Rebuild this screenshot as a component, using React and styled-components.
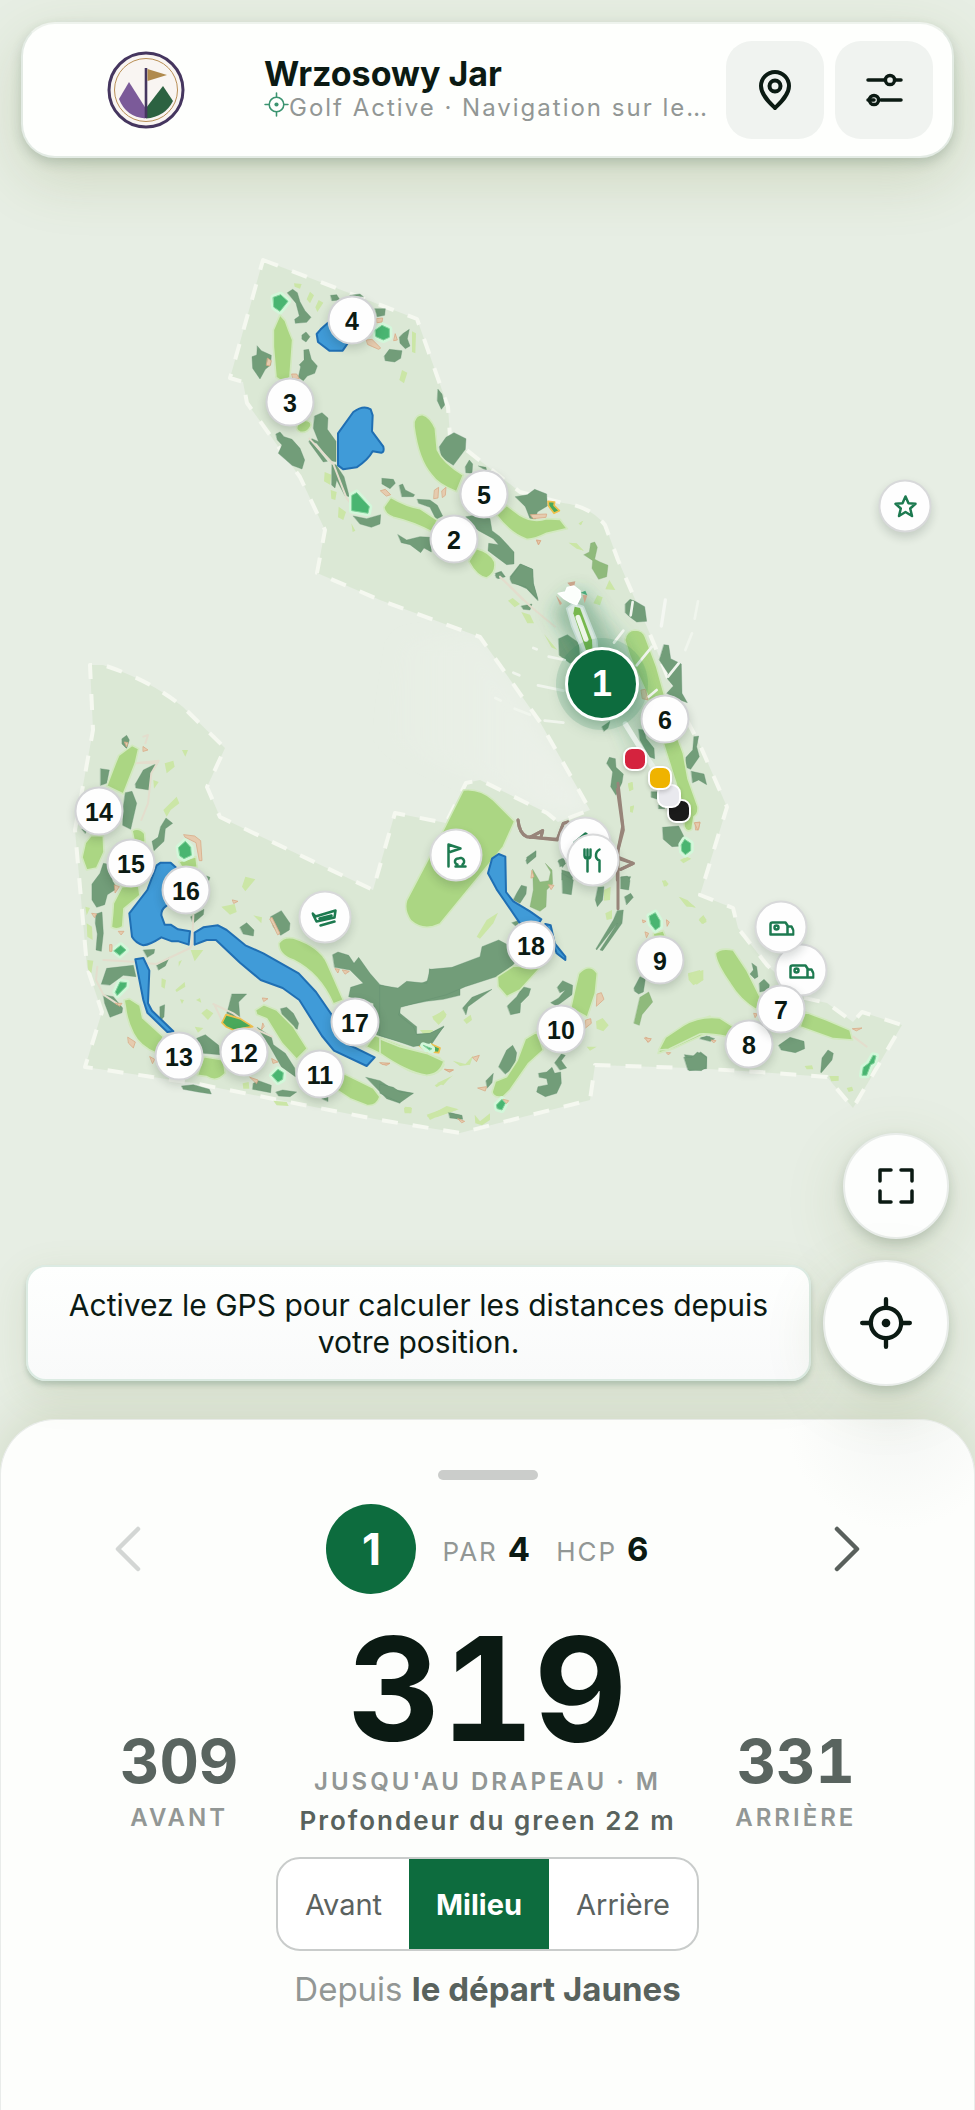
import React, { useState } from "react";
import styled, { createGlobalStyle, css } from "styled-components";

const GlobalStyle = createGlobalStyle`
  *, *::before, *::after { box-sizing: border-box; }
  html, body { margin: 0; padding: 0; }
  body { background: #e7eee4; }
  button { font: inherit; color: inherit; border: 0; padding: 0; margin: 0; background: none; cursor: pointer; }
  h1, p { margin: 0; }
`;

const INK = "#0b1a13";
const GREEN = "#0d6c3e";

const Page = styled.div`
  display: flex;
  flex-direction: column;
  min-height: 100vh;
  overflow-x: hidden;
  font-family: Inter, "Liberation Sans", sans-serif;
  color: ${INK};
  background: #e7eee4;
`;

/* ---------- header ---------- */

const Header = styled.header`
  position: relative;
  z-index: 2;
  display: flex;
  align-items: center;
  gap: 14px;
  margin: 22px 21px 0;
  padding: 17px 19px;
  border: 2px solid #e3ebe4;
  border-top-color: #eef3ed;
  border-radius: 34px;
  background: #fefffd;
  box-shadow: 0 5px 12px rgba(40, 75, 60, 0.2), 0 20px 60px rgba(110, 125, 50, 0.2);
`;

const LogoSlot = styled.div`
  display: flex;
  justify-content: center;
  flex: 0 0 208px;
`;

const Titles = styled.div`
  flex: 1 1 0;
  min-width: 0;
  display: flex;
  flex-direction: column;
`;

const Title = styled.h1`
  font-size: 34px;
  line-height: 36px;
  font-weight: 700;
`;

const Subtitle = styled.div`
  display: flex;
  align-items: center;
  color: #929795;
  font-size: 24px;
  line-height: 30px;
  letter-spacing: 2px;
  white-space: nowrap;

  svg { flex: none; margin-bottom: 8px; }
  span { overflow: hidden; text-overflow: ellipsis; }
`;

const Actions = styled.div`
  display: flex;
  gap: 11px;
`;

const ActionButton = styled.button`
  display: grid;
  place-items: center;
  width: 98px;
  height: 98px;
  border-radius: 26px;
  background: #f0f3f0;
`;

/* ---------- map ---------- */

const MapCanvas = styled.main`
  position: relative;
  font-family: "Liberation Sans", sans-serif;

  > svg { display: block; width: 100%; height: auto; overflow: visible; }
`;

const Marker = styled.button`
  position: absolute;
  display: grid;
  place-items: center;
  transform: translate(-50%, -50%);
  border-radius: 50%;
  background: #fefefe;
`;

const HolePin = styled(Marker)`
  width: 49px;
  height: 49px;
  border: 2px solid #d2d3d5;
  font-size: 25px;
  line-height: 28px;
  font-weight: 700;
  box-shadow: 0 4px 10px rgba(20, 40, 30, 0.18);

  ${(p) =>
    p.$active &&
    css`
      width: 74px;
      height: 74px;
      border: 3px solid #fff;
      background: ${GREEN};
      color: #fff;
      font-size: 36px;
      box-shadow: 0 0 0 9px rgba(40, 130, 90, 0.16), 0 4px 16px rgba(20, 80, 50, 0.35);
    `}
`;

const PoiPin = styled(Marker)`
  width: 53px;
  height: 53px;
  border: 2px solid #d8d9da;
  box-shadow: 0 5px 10px rgba(20, 40, 30, 0.16);
`;

const TeePin = styled(Marker)`
  width: 24px;
  height: 24px;
  border: 2px solid #fff;
  border-radius: 9px;
  background: ${(p) => p.$color};
  box-shadow: 0 2px 4px rgba(0, 0, 0, 0.18);
`;

const Controls = styled.section`
  position: relative;
  z-index: 1;
  display: flex;
  flex-direction: column;
  gap: 21px;
  padding: 0 26px 33px;
`;

const ControlRow = styled.div`
  display: flex;
  align-items: center;
  justify-content: flex-end;
  gap: 12px;
`;

const RoundButton = styled.button`
  flex: none;
  display: grid;
  place-items: center;
  width: ${(p) => p.$size}px;
  height: ${(p) => p.$size}px;
  border: 2px solid #e9edea;
  border-radius: 50%;
  background: #fdfefd;
  box-shadow: 0 5px 12px rgba(30, 60, 45, 0.18), 0 16px 60px rgba(110, 125, 60, 0.18);
`;

const Hint = styled.p`
  flex: 1;
  padding: 20px 30px 18px;
  border: 2px solid #dcebe3;
  border-radius: 20px;
  background: linear-gradient(#fefffe, #f9fafa);
  box-shadow: 0 4px 5px rgba(60, 100, 85, 0.24), 0 12px 40px rgba(110, 125, 60, 0.14);
  text-align: center;
  font-size: 30px;
  line-height: 37px;
`;

/* ---------- bottom sheet ---------- */

const Sheet = styled.section`
  position: relative;
  flex: 1;
  display: flex;
  flex-direction: column;
  align-items: center;
  padding: 50px 24px 90px;
  border: 1px solid #e9ecea;
  border-bottom: 0;
  border-radius: 56px 56px 0 0;
  background: radial-gradient(circle at 92% 0, #f4f6f4, #fdfefc 110px);
  box-shadow: 0 -8px 50px rgba(110, 125, 60, 0.18);
`;

const Handle = styled.div`
  width: 100px;
  height: 10px;
  border-radius: 5px;
  background: #cbcdcb;
`;

const HoleNav = styled.div`
  align-self: stretch;
  display: flex;
  align-items: center;
  justify-content: space-between;
  margin-top: 24px;
  padding: 0 79px;
`;

const StepButton = styled.button`
  display: grid;
  place-items: center;
  width: 48px;
  height: 64px;
  color: #59605c;
  &:disabled { color: #d3d6d4; cursor: default; }
`;

const HoleInfo = styled.div`
  display: flex;
  align-items: center;
  gap: 26px;
`;

const HoleBadge = styled.span`
  display: grid;
  place-items: center;
  width: 90px;
  height: 90px;
  border-radius: 50%;
  background: ${GREEN};
  color: #fff;
  font-size: 44px;
  font-weight: 700;
`;

const Fact = styled.span`
  display: flex;
  align-items: baseline;
  gap: 10px;
  color: #929795;
  font-size: 26px;
  letter-spacing: 2px;

  b { color: ${INK}; font-size: 33px; font-weight: 700; letter-spacing: 0; }
`;

const Distances = styled.div`
  align-self: stretch;
  display: grid;
  grid-template-columns: repeat(3, minmax(0, 1fr));
  align-items: end;
  margin-top: 23px;
`;

const Distance = styled.div`
  display: flex;
  flex-direction: column;
  align-items: center;
  white-space: nowrap;
`;

const Meters = styled.strong`
  font-weight: 700;
  font-size: ${(p) => (p.$main ? 144 : 61)}px;
  line-height: ${(p) => (p.$main ? 144 : 72)}px;
  color: ${(p) => (p.$main ? INK : "#59645f")};
  font-variant-numeric: tabular-nums;
`;

const Caption = styled.span`
  color: #929795;
  font-size: 24px;
  line-height: 42px;
  font-weight: 600;
  letter-spacing: 3px;
`;

const Depth = styled.span`
  color: #58625d;
  font-size: 26px;
  line-height: 36px;
  font-weight: 600;
  letter-spacing: 2px;
`;

const Segments = styled.div`
  display: flex;
  margin-top: 18px;
  height: 94px;
  border: 2px solid #c9cccb;
  border-radius: 24px;
  overflow: hidden;
  background: #fff;
`;

const Segment = styled.button`
  padding: 0 27px;
  font-size: 29px;
  color: #5b625f;

  ${(p) =>
    p.$active &&
    css`
      background: ${GREEN};
      color: #fff;
      font-weight: 700;
    `}
`;

const Origin = styled.p`
  margin-top: 16px;
  font-size: 33px;
  line-height: 44px;
  color: #929795;

  b { color: #58625d; font-weight: 700; }
`;

/* ---------- drawings ---------- */

const Logo = () => (
  <svg width="78" height="78" viewBox="0 0 78 78" aria-hidden="true">
    <circle cx="39" cy="39" r="37" fill="#f9f5f2" stroke="#45365f" strokeWidth="3" />
    <circle cx="39" cy="39" r="31.5" fill="none" stroke="#b98f55" strokeWidth="1" />
    <path d="M22 31 38.500 57V67.500Q19 66 12 48Z" fill="#7b5a99" />
    <path d="M56 35 39 57V67.500Q58 66 66 50Z" fill="#2c6241" />
    <path d="M39 17V67" stroke="#45365f" strokeWidth="2.600" />
    <path d="M40.500 18 60 24 40.500 30Z" fill="#b08a4d" />
  </svg>
);

const Target = ({ size, stroke, color }) => (
  <svg width={size} height={size} viewBox="0 0 24 24" fill="none" stroke={color} strokeWidth={stroke} strokeLinecap="round" aria-hidden="true">
    <circle cx="12" cy="12" r="7" />
    <circle cx="12" cy="12" r="2" fill={color} stroke="none" />
    <path d="M12 1V5M12 19V23M1 12H5M19 12H23" />
  </svg>
);

const PlaceIcon = () => (
  <svg width="34" height="42" viewBox="0 0 34 42" fill="none" stroke={INK} strokeWidth="4" strokeLinejoin="round" aria-hidden="true">
    <path d="M17 39C12 34 3 26 3 17a14 14 0 0 1 28 0c0 9-9 17-14 22Z" />
    <circle cx="17" cy="17" r="5.500" />
  </svg>
);

const SlidersIcon = () => (
  <svg width="38" height="36" viewBox="0 0 38 36" fill="none" stroke={INK} strokeWidth="3.500" strokeLinecap="round" aria-hidden="true">
    <path d="M3 8H20M30 8H36M3 28H9M16 28H36" />
    <circle cx="25" cy="8" r="4.600" />
    <circle cx="9" cy="28" r="4.600" />
  </svg>
);

const ExpandIcon = () => (
  <svg width="36" height="36" viewBox="0 0 36 36" fill="none" stroke={INK} strokeWidth="3.500" strokeLinecap="round" strokeLinejoin="round" aria-hidden="true">
    <path d="M2 13V2H13M23 2H34V13M34 23V34H23M13 34H2V23" />
  </svg>
);

const Chevron = ({ left }) => (
  <svg width="28" height="46" viewBox="0 0 28 46" fill="none" stroke="currentColor" strokeWidth="4.500" strokeLinecap="round" strokeLinejoin="round" aria-hidden="true">
    <path d={left ? "M24 3 4 23 24 43" : "M4 3 24 23 4 43"} />
  </svg>
);

const poiIcons = {
  star: <path d="M13 3 16 9.800 23 10.300 17.700 15 19.500 22.500 13 18.500 6.500 22.500 8.300 15 3 10.300 10 9.800Z" />,
  range: <path d="M5 24V2L17 6 5 10M12 24H22M14 22a3 3 0 0 1 1-6 3 3 0 0 1 4 6" />,
  food: <path d="M4 2V8Q4 11 7 11Q10 11 10 8V2M7 2V24M19 2Q15 4 15.500 9Q16 12 19 13V24" />,
  house: <path d="M2 12 13 3 24 12M5 12V23H21V12" />,
  trolley: <path d="M1 9 4 12 24 6 23 13 5 17ZM8 14 20 11M9 21 23 17" />,
  camper: (
    <>
      <path d="M2 20V10Q2 8 4 8H17L19 11V20ZM19 12H23L25 16V20H19" />
      <circle cx="8" cy="13" r="2" />
    </>
  ),
};

const PoiIcon = ({ name }) => (
  <svg width="26" height="26" viewBox="0 0 26 26" fill="none" stroke="#1d7a50" strokeWidth="2.500" strokeLinecap="round" strokeLinejoin="round" aria-hidden="true">
    {poiIcons[name]}
  </svg>
);

const BOUNDARY =
  "M263 260 417 319 448 407 450 437 520 492 563 503Q590 506 605 525L618 560 647 627 680 707 700 745 727 807 700 895 733 908 738 928 767 965 800 997 827 1003 853 1022 862 1012 902 1025 853 1108 827 1077 760 1072 690 1068 595 1065 590 1100 460 1133 380 1120 193 1083 85 1067 102 1012 87 967 75 830 93 730 90 665 103 665Q150 680 183 707L225 748 207 787 220 817 373 890 395 813 446 823 466 783 480 780 547 813 558 822 590 810 540 722 480 637 380 600 317 573 325 530 300 477 247 403 243 382 230 378Z";

const SHEETS = [
  {
    origin: "200 240",
    trees:
      "M262 158 278 148 292 158 300 185 315 212 333 232 320 247 286 250 284 238 298 228 288 190ZM172 318 184 332 214 346 212 375 196 388 180 417 158 385 156 350 170 345ZM312 330 326 328 334 358 352 378 344 400 322 408 310 422 295 412 302 380 298 374 312 360ZM306 285 318 276 330 290 318 306 306 298ZM392 166 410 164 420 180 396 182ZM450 166 480 162 490 170ZM525 206 556 206 554 226 532 230ZM610 280 628 268 622 296 630 318 616 326 600 310 598 292ZM553 348 568 328 606 332 602 355 584 366 556 362ZM714 448 726 462 734 495 724 508 712 482ZM344 528 366 518 384 534 382 568 408 604 408 665 392 662 350 610 326 604 336 596 356 605 340 565ZM228 582 240 576 252 590 276 598 300 625 314 660 306 687 276 676 235 640 246 615 232 600ZM332 602 382 664 370 666 328 608ZM396 674 408 674 432 710 448 770 434 766 410 720 405 744 395 735ZM546 715 580 718 586 730 570 746 546 732ZM598 736 608 732 616 750 644 764 640 770 606 770ZM652 778 690 780 712 796 728 828 708 838 690 802 656 790ZM460 828 500 836 542 824 540 852 514 862 480 852ZM594 884 620 900 660 890 692 892 694 936 672 924 662 938 630 914 604 908ZM718 620 738 592 762 578 798 596 796 628 760 676 724 652ZM796 680 808 660 818 672 816 700 798 698ZM836 678 858 682 860 692ZM798 830 830 825 870 836 876 872 900 890 942 936 942 972 920 974 864 932 866 910 896 914 880 896 836 872 810 850ZM946 770 982 764 1004 748 1040 762 1042 798 1012 816 1006 838 990 836 976 800ZM886 1000 904 994 916 1010 894 1016ZM930 1010 960 972 998 988 1000 1030 1014 1082 980 1046 936 1026Z",
    olive: "M1152 944 1168 936 1172 910 1184 906 1192 922 1184 958 1200 966 1224 976 1220 1010 1196 1018 1176 985 1178 962Z",
    fairway:
      "M240 224 256 242 266 270 278 300 270 412 Q248 430 228 412L220 320 220 270ZM300 540 Q340 540 332 560 320 582 300 576 285 570 292 556ZM642 545 Q650 522 668 524 690 530 706 565L712 630Q730 670 790 705L770 755Q715 735 695 705 655 660 642 560ZM552 800 572 772Q620 800 660 806L712 840 696 876Q640 846 580 832 550 820 552 800ZM806 964 830 926Q870 936 884 965 890 1000 860 1014 830 1010 806 964ZM890 826 920 796 960 826Q1000 850 1040 836L1080 838 1102 866 1040 880Q1000 900 980 898 930 880 890 826Z",
    rough:
      "M282 130 305 132 300 146 284 140ZM330 155 342 166 330 190 320 178ZM356 180 370 188 352 216 346 202ZM636 274 648 280 646 340 636 336ZM606 390 622 398 612 430 598 420ZM374 696 394 704 390 734 372 724ZM392 750 410 756 406 780 394 776ZM416 800 438 816 430 840 414 832ZM454 850 466 872 458 876ZM1136 850 1150 842 1142 856ZM1108 908 1130 910 1150 932 1120 918Z",
    green: "M220 172 242 164 264 184 240 214 222 202ZM526 270 546 256 568 266 568 292 550 300 528 290ZM456 766 470 758 508 800 504 820 456 812Z",
    sand: "M500 300 516 298 542 324 536 328 504 314ZM586 282 592 300 582 302ZM276 402 290 402 298 416 280 418ZM542 752 556 748 572 764 560 768ZM704 750 716 742 714 774 702 776ZM726 752 738 742 736 766 728 772ZM992 824 1040 822 1038 832 1000 836ZM203 355 214 362 210 378 200 376ZM530 236 548 234 546 246 532 248ZM1010 900 1022 902 1016 914Z",
    amber: "M1044 784 1064 786 1062 796 1078 812 1062 820 1046 798Z",
    water: "M362 268 384 248 450 300 428 332 388 332 354 306 350 282ZM414 580 460 516Q490 494 512 508L518 526 516 574 550 620Q554 636 544 638L518 634Q504 660 470 682L430 688 414 676Z",
    paths: "M328 596 400 672 440 775 460 800M900 1010 970 1080",
    roads: "",
  },
  {
    origin: "480 480",
    trees:
      "M46 285 60 276 74 290 50 294ZM124 378 156 372 150 390 130 388ZM90 296 122 252 158 268 160 310 174 358 138 320 96 310ZM436 372 450 358 466 364 494 380 500 424 470 426 446 408 436 398ZM236 476 262 464 296 488 300 540 270 550 238 526ZM552 494 566 496 572 536 604 552 606 640 622 668 600 660 560 640 580 618 562 596 564 580 538 540ZM642 770 656 768 650 800 658 830 632 868 614 860 618 832 638 810ZM634 874 672 882 680 914 656 900 638 908ZM476 748 492 750 498 775 522 805 524 836 508 830 480 780ZM380 850 388 832 406 836 408 862 430 882 426 908 408 946 392 920 398 876ZM548 1042 596 1038 612 1070 606 1098 576 1100 550 1078ZM366 740 390 724 384 744 372 754ZM514 935 532 935 532 958 514 952ZM536 975 556 975 554 986 536 986ZM140 1132 168 1112 166 1128 142 1150ZM234 1144 246 1136 256 1150 248 1162ZM246 1170 280 1180 276 1200 246 1200ZM424 1190 452 1190 448 1200 426 1200Z",
    fairway:
      "M434 480 Q440 450 466 450 490 452 496 470L530 560 580 740 610 820 624 896 654 980Q656 1004 642 1010L636 1048Q620 1060 612 1040L610 980 550 790 500 640 450 530Z",
    rough:
      "M376 328 388 300 406 330ZM84 362 98 354 120 372 104 382ZM124 396 150 404 162 430 142 430ZM340 370 352 346 368 352 360 376ZM266 188 290 192 312 212 290 206ZM296 132 308 122 304 134ZM444 912 458 906 460 928 448 934ZM450 980 462 976 458 998 450 996ZM600 1140 620 1130 634 1136 610 1150ZM192 462 232 510 214 502Z",
    green: "M604 1094 614 1078 632 1090 632 1112 616 1124 606 1114Z",
    sand: "M646 1028 660 1026 656 1048 648 1050ZM484 630 496 628 504 660 488 656ZM172 182 182 182 176 192Z",
    amber: "",
    water: "",
    paths: "M60 290 150 378 225 440",
    roads: "M412 928 428 1040 412 1120 412 1200M114 1020Q118 1060 140 1070L232 1078 250 1030 264 1026M150 1072 188 1052 184 1068M416 1136 460 1150 422 1168",
  },
  {
    origin: "60 640",
    trees:
      "M186 296 200 286 208 300 200 326 186 312ZM122 386 148 390 140 430 122 436ZM226 432 250 390 294 368 272 400 268 450 228 444ZM196 458 216 454 230 490 212 568 188 556 190 500ZM302 560 318 534 338 550 316 566 312 604 282 632 276 604 294 592ZM96 732 120 700 130 670 142 672 158 724 172 745 142 764 134 794 110 802 96 780ZM108 822 126 816 130 880 124 934 108 930 112 882 106 850ZM250 930 284 928 282 940 262 952ZM124 1032 140 985 220 976 228 1010 190 1006 150 1035ZM130 1064 160 1070 188 1104 186 1118 150 1132 134 1090ZM290 976 328 952 316 978 296 990ZM300 1100 314 1094 312 1130 300 1144ZM392 830 432 808 430 824 400 850ZM440 708 450 712 446 724ZM540 862 560 848 582 870 580 888 550 882ZM632 830 664 812 690 850 688 870 662 886 640 860ZM410 1195 436 1184 476 1216 480 1244 430 1240ZM516 1062 560 1062 536 1086 540 1140 500 1120 506 1100ZM592 1162 634 1190 640 1214 676 1240 704 1284 706 1310 664 1280 630 1220ZM662 1106 680 1102 700 1120 716 1150 712 1168 690 1160 666 1124ZM365 1338 400 1334 448 1348 454 1362 414 1356 370 1348ZM648 1356 668 1350 710 1356 690 1370 656 1368ZM580 1330 596 1322 634 1336 632 1358 578 1348ZM786 1376 804 1370 804 1384ZM918 1312 960 1322 1000 1348 1060 1360 1020 1378 1020 1390 980 1376ZM818 944 834 936 866 946 882 970 896 952 930 1000 960 1034 1030 1052 1108 1020 1108 986 1130 1000 1200 976 1200 1066 1150 1078 1100 1084 1020 1100 1020 1120 1070 1160 1070 1182 1110 1180 1152 1158 1110 1220 1060 1216 950 1186 940 1090 866 1070 872 1042 910 1030 870 990 824 982ZM66 568 80 572 76 580ZM1170 1418 1200 1426 1200 1440 1180 1432Z",
    fairway:
      "M216 316 236 326 226 370 190 462 140 438 168 365 176 346ZM76 608 94 586 130 588 132 636 110 684 80 690 66 652ZM216 572 Q236 560 254 580L256 608 222 600ZM160 790 186 740 236 738 240 766 192 806 188 860 Q170 872 154 862L158 820ZM192 1080 208 1076 240 1096 248 1134 310 1190 290 1240 Q240 1220 220 1180 200 1140 196 1100ZM412 1306 432 1250 490 1260 496 1300Q470 1330 440 1310ZM586 1110 612 1094 650 1110 700 1160 742 1226 710 1258 666 1210 620 1136 590 1124ZM830 1350 850 1300 940 1344 960 1370Q950 1400 920 1396L870 1376ZM656 910 Q670 888 700 894 780 920 802 970L850 1080 820 1092Q780 1000 700 960 656 946 656 910ZM918 1220 944 1186 1060 1230 1140 1254 1152 1274Q1140 1304 1100 1306 1040 1300 1000 1260ZM356 665 408 650 412 682 366 682Z",
    rough:
      "M314 370 340 362 344 380 320 400ZM280 420 296 426 282 446ZM310 510 350 470 358 490 332 510 320 530ZM556 710 586 718 556 754 546 740ZM484 800 524 792 530 816 510 824ZM366 330 384 330 376 350ZM580 826 606 832 604 850ZM76 800 90 804 80 826ZM80 850 96 860 98 900 82 890ZM305 1015 318 1020 314 1046 304 1040ZM346 1050 374 1026 376 1040 350 1056ZM392 930 430 930 404 964ZM424 1120 440 1106 460 1120 444 1140ZM356 965 366 960 356 980ZM360 1078 372 1080 366 1092ZM408 1080 420 1074 424 1088ZM640 1382 680 1386 686 1398 650 1396ZM1034 1400 1054 1402 1050 1420 1034 1416ZM1100 1424 1156 1404 1190 1410 1130 1430 1110 1440ZM1080 1170 1120 1170 1104 1200ZM1116 1130 1150 1112 1158 1130 1136 1154ZM1124 1336 1180 1306 1150 1330 1130 1342ZM548 1330 566 1326 568 1346 550 1346ZM404 1160 430 1164 414 1178ZM82 960 100 962 94 1000 84 988Z",
    green: "M356 622 376 604 392 622 394 646 372 656 360 648ZM162 932 182 916 198 930 180 946ZM166 1056 180 1026 200 1028 198 1040 172 1066ZM636 1306 654 1288 670 1298 668 1318 654 1326ZM1088 1214 1104 1214 1116 1230 1100 1228Z",
    sand: "M372 584 404 588 422 602 426 662 418 662 408 608 376 592ZM194 306 204 308 200 320ZM250 320 264 330 250 334ZM630 836 636 832 660 880 654 884ZM164 735 178 740 166 758ZM96 820 110 822 104 832ZM150 914 156 914 156 934 150 934ZM176 874 192 874 184 884ZM204 1192 226 1206 220 1224 206 1210ZM270 1250 284 1258 278 1270ZM518 780 534 784 522 790ZM570 1312 594 1320 590 1330ZM608 1150 604 1170 612 1160ZM608 1074 624 1076 612 1084ZM964 1270 990 1270 980 1276ZM1154 1288 1180 1290 1170 1296ZM636 1256 654 1266 640 1270ZM826 986 838 988 834 998ZM848 990 868 994 856 1002ZM166 1090 186 1090 180 1098Z",
    amber: "M486 1148 498 1124 540 1136 578 1160 520 1170 498 1160ZM1078 1216 1094 1204 1140 1224 1136 1238 1100 1234Z",
    water: "M290 676 302 668 332 668 400 730 316 800Q304 808 304 826L314 854 332 854 354 868 390 874 386 914 356 904 336 904 304 892Q270 914 250 916 226 908 216 890L208 820 262 750ZM404 878 430 862 474 856 500 870 556 916 610 940 716 1000 768 1056 830 1146 824 1170 862 1212 944 1252 920 1278 822 1232 786 1188 718 1080 668 1044 602 1020 540 968 468 900 440 900 404 914ZM226 958 250 954 268 992 264 1090 276 1112 340 1174 322 1176 262 1118 250 1080Z",
    paths: "M250 290 264 285 256 310M230 370 296 362 274 400 264 490 244 540M400 826 396 916 390 924 290 972 260 970M130 960 232 966M112 980 108 1020 130 1064 170 1090M460 1092 520 1120 580 1164 636 1190M240 368 290 370M464 1096 490 1150",
    roads: "",
  },
  {
    origin: "380 760",
    trees:
      "M0 676 54 684 80 664 140 670 150 628 216 622 300 590 306 560 356 540 386 556 410 600 380 640 256 680 200 704 140 720 62 742 56 765 100 800 110 824 150 820 192 800 150 850 100 860 0 826ZM410 400 424 376 440 380 438 402 420 430 400 420ZM438 300 468 274 468 290 442 312ZM396 488 420 480 410 500ZM536 300 552 294 556 312 540 320ZM546 340 580 360 574 404 548 400ZM654 382 672 380 668 420 652 440 646 420ZM722 352 742 348 750 362 746 390 722 386ZM734 410 752 400 760 412 740 434ZM712 452 730 450 726 490 668 572 660 570 712 490 650 570 648 566 700 480ZM248 744 276 712 336 688 264 740 258 764ZM382 738 410 710 428 680 452 686 446 706 422 730 420 758 392 764ZM532 682 548 662 578 676 576 704 530 738 512 728 536 714 556 690 540 698ZM356 920 380 870 398 856 410 878 404 920 376 942ZM318 962 340 940 336 968 322 984ZM524 908 544 882 556 886 544 902 560 924 540 930ZM476 940 500 936 516 922 524 940 542 936 544 970 530 1000 496 1010 470 996 474 980 504 974 500 956 478 952ZM762 684 780 650 796 658 790 696 776 702 764 694ZM914 884 944 888 962 876 980 890 980 926 928 932ZM0 972 40 982 60 996 100 1000 60 1028 0 1000ZM206 1058 246 1066 248 1078 210 1074ZM962 832 990 830V842Z",
    olive: "M458 328 480 366 506 362 512 336 496 310 516 330 518 372 500 390 498 440 480 454 450 440 460 390ZM780 712 806 696 818 726 786 764 778 796 762 790Z",
    fairway:
      "M250 90Q300 84 340 120L404 184 370 260 180 492Q130 516 92 482 70 450 80 420L180 230ZM352 650 400 618 480 624 420 690 380 710 354 680ZM596 640 Q630 606 652 640L646 700 622 772 572 744 584 690ZM470 816 490 870 446 910 390 990 370 1010 Q340 1016 336 996L346 964 380 950 412 900 436 836ZM0 836 60 860 140 880 192 904Q180 944 140 946 80 936 0 880ZM834 880 850 840 910 800 990 768V816L880 866ZM820 520 850 512 856 528 820 530Z",
    rough: "M290 530 320 480 354 458 340 490 300 536ZM672 390 692 380 690 420 672 422ZM676 460 696 450 696 476 680 480ZM900 410 946 440 920 440ZM924 640 960 630 970 660 940 676 926 660ZM648 784 668 774 686 796 670 814 650 806ZM158 776 190 750 200 764 176 794ZM250 780 272 764 276 780 260 792ZM620 860 650 860 630 872ZM284 1064 300 1084 330 1060 330 1080 306 1096 286 1090ZM956 480 970 466 980 486 966 492ZM140 1070 200 1038 236 1048 170 1072ZM846 360 864 374 852 380ZM218 902 256 912 280 886 270 914 240 918ZM72 1044 96 1044 94 1060 74 1060ZM170 970 212 950 190 976ZM744 70 756 66 760 88 748 94ZM750 140 762 138 758 158Z",
    green: "M808 468 826 458 840 482 840 500 826 510 812 492ZM350 1034 366 1018 376 1030 366 1050 352 1046ZM130 856 156 866 150 870Z",
    sand: "M652 702 664 698 672 718 650 738ZM618 780 632 776 634 790 614 806ZM294 984 320 980 316 992ZM278 892 298 886 290 904ZM196 928 220 930 208 934ZM456 332 462 350 454 354ZM506 374 522 376 514 388ZM860 480 868 486 862 498ZM788 480 798 484 790 488ZM796 516 806 520 800 532ZM944 188 960 188 954 210ZM370 1018 386 1022 380 1030ZM798 832 812 840 804 846ZM234 1076 254 1084 246 1088ZM860 878 872 878 866 884ZM0 908 30 910 10 914Z",
    amber: "",
    water: "M336 296 356 282 376 290 378 396 400 424 450 454 484 478 470 500 420 490 372 420 350 388 324 340ZM496 492 512 496 524 550 556 590 556 600 530 580 510 520Z",
    paths: "",
    roads: "M714 70 730 210 714 270 714 446M414 180Q418 220 440 230L532 240 550 190 564 186M450 232 488 212 484 228M716 292 760 310 722 328",
  },
  {
    origin: "600 820",
    trees:
      "M536 676 570 652 612 664 614 686 586 698 544 690ZM662 756 666 714 684 690 700 700 696 720 664 758ZM252 712 276 712 292 696 320 712 318 742 304 752 264 750ZM478 490 492 478 508 494 506 510 480 516ZM456 430 470 440 474 470 464 476 450 462 460 450ZM300 656 320 648 344 656 332 664Z",
    fairway:
      "M346 400Q360 382 400 390 420 420 440 450L480 530 470 570Q420 540 390 490 348 430 346 400ZM176 690 196 652 250 616 Q300 586 360 594L400 620 380 650Q330 640 300 642L206 688ZM600 620 616 576 680 600 750 630 758 660 700 656Z",
    rough: "M236 230 262 240 288 264 256 256ZM298 296 310 286 320 300 310 312ZM264 464 310 450 310 480 290 494ZM614 738 636 736 640 748 620 748ZM688 768 716 768 716 782 694 784ZM740 804 756 800 760 812 746 816ZM186 184 196 180 206 192 198 200Z",
    green: "M820 706 828 708 822 730 812 734 800 766 786 766 790 742 806 730Z",
    sand: "M758 626 786 624 770 632ZM134 654 154 656 146 666ZM462 580 472 582 466 592ZM334 660 348 662 342 668Z",
    amber: "",
    water: "",
    paths: "M760 650 800 680",
    roads: "",
  },
];

const CourseMap = () => (
  <svg viewBox="0 158 975 975" role="img" aria-label="Plan du parcours Wrzosowy Jar">
    <defs>
      <filter id="soft" x="-80%" y="-40%" width="260%" height="180%">
        <feGaussianBlur stdDeviation="9" />
      </filter>
      <linearGradient id="glow" x1="0" y1="0" x2="1" y2="0">
        <stop offset="0" stopColor="#f1f4ef" stopOpacity="0" />
        <stop offset="1" stopColor="#f1f4ef" stopOpacity="0.500" />
      </linearGradient>
    </defs>
    <path d="M400 640 480 637 590 810 547 813 480 780 380 740Z" fill="url(#glow)" filter="url(#soft)" />
    <path d={BOUNDARY} fill="#dbe8d5" />
    <path d={BOUNDARY} fill="none" stroke="#f5f8f0" strokeWidth="4" strokeDasharray="16 15" strokeLinejoin="round" />
    {SHEETS.map((s) => (
      <g key={s.origin} transform={`translate(${s.origin}) scale(0.33333)`} strokeLinejoin="round" strokeLinecap="round">
        <path d={s.rough} fill="#cbe6a6" />
        <path d={s.trees} fill="#729d79" stroke="#5f8c6d" strokeWidth="1" />
        {s.olive && <path d={s.olive} fill="#8fba7c" stroke="#7fa872" strokeWidth="1" />}
        <path d={s.fairway} fill="#abd683" stroke="#d2e9bf" strokeWidth="5" />
        <path d={s.paths} fill="none" stroke="#e3ddcd" strokeWidth="6" />
        <path d={s.roads} fill="none" stroke="#98857a" strokeWidth="9" />
        <path d={s.amber} fill="#49a95b" stroke="#efc04c" strokeWidth="5" />
        <path d={s.green} fill="#49b571" stroke="#d3f7da" strokeWidth="18" />
        <path d={s.green} fill="#49b571" stroke="#7fd09a" strokeWidth="3" />
        <path d={s.sand} fill="#e6cbae" stroke="#d9ab86" strokeWidth="3" strokeOpacity="0.800" />
        <path d={s.water} fill="#409bd8" stroke="#206fb3" strokeWidth="6" />
      </g>
    ))}
    <path d="M562 600 610 650 650 750" fill="none" stroke="#2c7d57" strokeWidth="34" strokeOpacity="0.250" filter="url(#soft)" />
    <path d="M556 620 566 600 588 590 600 624 620 690 596 700Z" fill="#2c7d57" fillOpacity="0.250" filter="url(#soft)" />
    <g transform="translate(480 480) scale(0.33333)" strokeLinecap="round" strokeLinejoin="round">
      <path d="M262 308 286 304 280 330ZM228 346 246 370 240 376ZM308 345 322 346 314 370Z" fill="#c9a58b" />
      <path d="M302 338 316 332 322 346Z" fill="#49a97a" />
      <path d="M260 385 280 370 310 380 350 480 354 520 310 520 276 440Z" fill="#d9e8df" stroke="#c5dbd3" strokeWidth="5" />
      <path d="M284 380 300 384 336 480 338 520 318 510 280 400Z" fill="#77b84e" />
      <path d="M294 412 318 478" stroke="#eef6e9" strokeWidth="15" />
      <path d="M234 340 256 336 262 322 282 318 300 332 302 350 290 374 272 368 252 356Z" fill="#fcfffc" stroke="#fff" strokeWidth="4" />
      <path d="M436 732 476 796 520 862 560 900" stroke="#e7f0e8" strokeWidth="16" fill="none" />
      <path d="M556 360 544 438" stroke="#f4f7f2" strokeWidth="10" />
      <path d="M654 364 644 416M636 460 616 510M458 366 452 406M430 452 402 488M516 500 470 556M596 550 564 590M530 630 506 650" stroke="#f0f5ed" strokeWidth="8" />
      <path d="M206 530 254 540M174 616 250 632M104 686 150 704M194 722 250 728M100 578 118 586M160 504 170 508M46 654 62 662" stroke="#f0f5ed" strokeWidth="8" />
    </g>
  </svg>
);

/* ---------- data ---------- */

const MAP = { top: 158, width: 975, height: 975 };

const at = (x, y) => ({
  left: `${(x / MAP.width) * 100}%`,
  top: `${((y - MAP.top) / MAP.height) * 100}%`,
});

const holes = [
  [2, 454, 539], [3, 290, 402], [4, 352, 320], [5, 484, 494], [6, 665, 719],
  [8, 749, 1044], [7, 781, 1009], [9, 660, 960], [10, 561, 1029], [11, 320, 1074],
  [12, 244, 1052], [13, 179, 1056], [14, 99, 811], [15, 131, 863], [16, 186, 890],
  [17, 355, 1022], [18, 531, 945],
];

const pois = [
  ["star", "Point favori", 905, 506],
  ["range", "Practice", 456, 855],
  ["house", "Club-house", 585, 843],
  ["food", "Restaurant", 593, 860],
  ["trolley", "Chariots", 325, 917],
  ["camper", "Aire de camping 1", 801, 970],
  ["camper", "Aire de camping 2", 781, 927],
];

const tees = [
  ["Noirs", "#1b1b1b", 679, 811],
  ["Blancs", "#e9e9ee", 669, 796],
  ["Jaunes", "#efb300", 660, 778],
  ["Rouges", "#d5233e", 635, 759],
];

export default function App() {
  const [pin, setPin] = useState("Milieu");

  return (
    <Page>
      <GlobalStyle />
      <Header>
        <LogoSlot><Logo /></LogoSlot>
        <Titles>
          <Title>Wrzosowy Jar</Title>
          <Subtitle>
            <Target size={25} stroke={1.500} color="#3b9470" />
            <span>Golf Active · Navigation sur le…</span>
          </Subtitle>
        </Titles>
        <Actions>
          <ActionButton aria-label="Choisir le parcours"><PlaceIcon /></ActionButton>
          <ActionButton aria-label="Réglages"><SlidersIcon /></ActionButton>
        </Actions>
      </Header>

      <MapCanvas>
        <CourseMap />
        {pois.map(([icon, label, x, y]) => (
          <PoiPin key={label} aria-label={label} style={at(x, y)}><PoiIcon name={icon} /></PoiPin>
        ))}
        {holes.map(([n, x, y]) => (
          <HolePin key={n} style={at(x, y)}>{n}</HolePin>
        ))}
        {tees.map(([name, color, x, y]) => (
          <TeePin key={name} aria-label={`Départ ${name}`} $color={color} style={at(x, y)} />
        ))}
        <HolePin $active style={at(602, 684)}>1</HolePin>
      </MapCanvas>

      <Controls>
        <ControlRow>
          <RoundButton $size={106} aria-label="Plein écran"><ExpandIcon /></RoundButton>
        </ControlRow>
        <ControlRow>
          <Hint>Activez le GPS pour calculer les distances depuis votre position.</Hint>
          <RoundButton $size={126} aria-label="Me localiser">
            <Target size={52} stroke={2} color={INK} />
          </RoundButton>
        </ControlRow>
      </Controls>

      <Sheet>
        <Handle />
        <HoleNav>
          <StepButton disabled aria-label="Trou précédent"><Chevron left /></StepButton>
          <HoleInfo>
            <HoleBadge>1</HoleBadge>
            <Fact>PAR <b>4</b></Fact>
            <Fact>HCP <b>6</b></Fact>
          </HoleInfo>
          <StepButton aria-label="Trou suivant"><Chevron /></StepButton>
        </HoleNav>
        <Distances>
          <Distance>
            <Meters>309</Meters>
            <Caption>AVANT</Caption>
          </Distance>
          <Distance>
            <Meters $main>319</Meters>
            <Caption>JUSQU'AU DRAPEAU · M</Caption>
            <Depth>Profondeur du green 22 m</Depth>
          </Distance>
          <Distance>
            <Meters>331</Meters>
            <Caption>ARRIÈRE</Caption>
          </Distance>
        </Distances>
        <Segments role="group" aria-label="Position du drapeau">
          {["Avant", "Milieu", "Arrière"].map((s) => (
            <Segment key={s} $active={s === pin} aria-pressed={s === pin} onClick={() => setPin(s)}>{s}</Segment>
          ))}
        </Segments>
        <Origin>Depuis <b>le départ Jaunes</b></Origin>
      </Sheet>
    </Page>
  );
}
